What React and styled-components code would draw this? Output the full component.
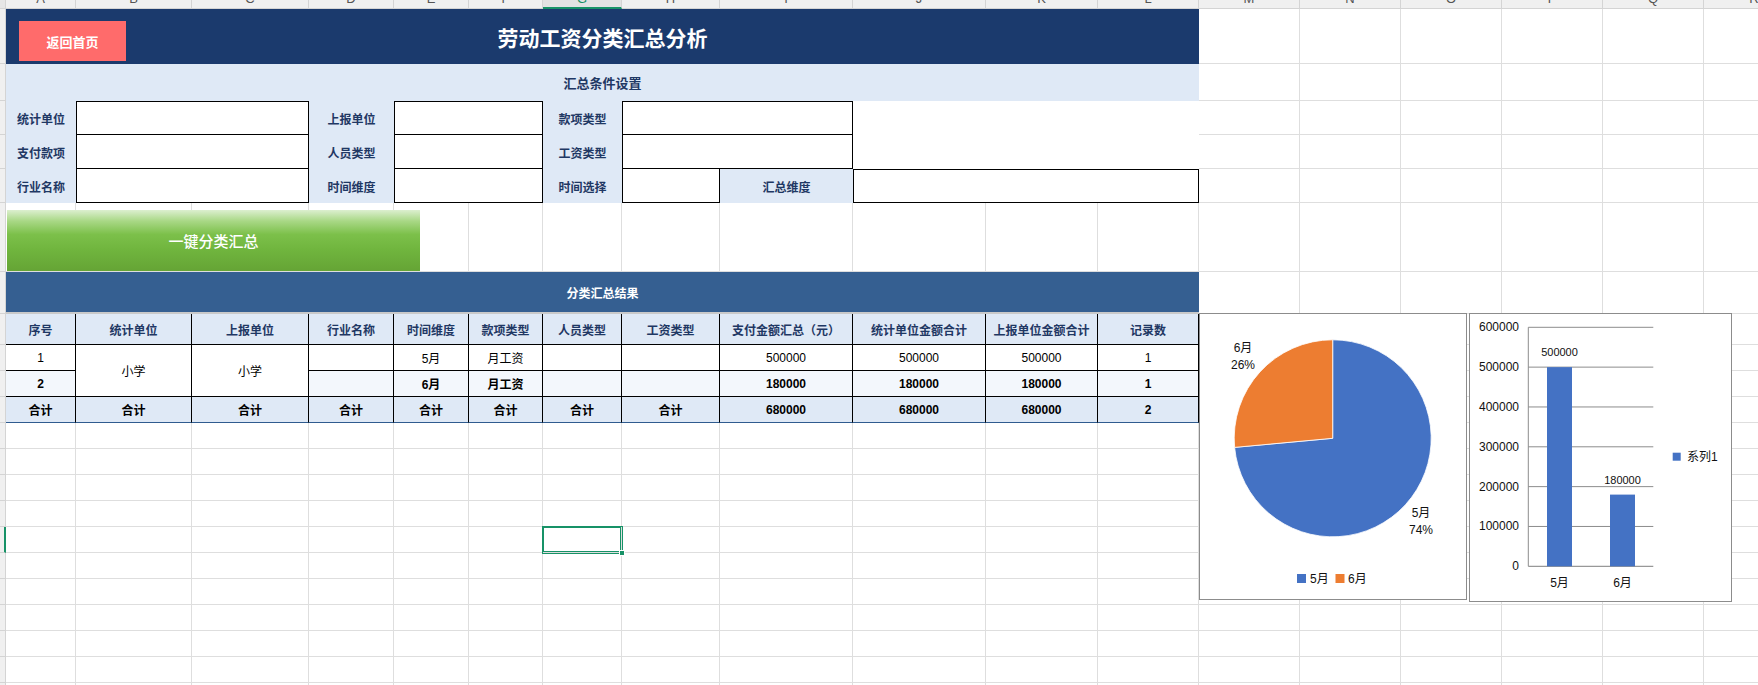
import React from "react";
import styled, { createGlobalStyle, css } from "styled-components";

const NAVY = "#1b3a6d";
const BAND = "#355f91";
const PALE = "#dfe9f6";
const STRIPE = "#f3f7fc";
const INK = "#1f3864";
const GRID = "#dedede";
const GREEN = "#179267";
const FONT = `"Liberation Sans", "Noto Sans CJK SC", sans-serif`;

// sheet geometry, columns A..R and rows from the title row down
const COL_WIDTHS = [70, 116, 117, 85, 75, 74, 79, 98, 133, 133, 112, 101, 101, 101, 101, 101, 101, 101];
const ROW_HEIGHTS = [55, 37, 34, 34, 34, 69, 42, 31, 26, 26, 26, 26, 26, 26, 26, 26, 26, 26, 26, 26, 26, 26];
const LETTERS = "ABCDEFGHIJKLMNOPQR".split("");
const SEL_COL = 6;
const SEL_ROW = 15;

const GlobalStyle = createGlobalStyle`
  html, body {
    margin: 0;
    padding: 0;
    background: #fff;
    overflow: hidden;
  }
  body {
    font-family: ${FONT};
  }
`;

const place = css`
  grid-column: ${(p) => p.$c + 2} / span ${(p) => p.$cs || 1};
  grid-row: ${(p) => p.$r + 2} / span ${(p) => p.$rs || 1};
`;

const Workbook = styled.div`
  width: 1758px;
  height: 685px;
  overflow: hidden;
  background: #fff;
  font-family: ${FONT};
`;

const Sheet = styled.div`
  display: grid;
  grid-template-columns: 6px ${COL_WIDTHS.map((w) => `${w}px`).join(" ")};
  grid-template-rows: 9px ${ROW_HEIGHTS.map((h) => `${h}px`).join(" ")};
`;

const Corner = styled.div`
  grid-column: 1;
  grid-row: 1;
  background: #e6e6e6;
  border-right: 1px solid #d4d4d4;
  border-bottom: 1px solid #d4d4d4;
  box-sizing: border-box;
`;

const ColHead = styled.div`
  grid-row: 1;
  grid-column: ${(p) => p.$c + 2};
  display: flex;
  align-items: flex-end;
  justify-content: center;
  overflow: hidden;
  box-sizing: border-box;
  background: ${(p) => (p.$active ? "#e2e2e2" : "#f0f0f0")};
  border-right: 1px solid #d4d4d4;
  border-bottom: ${(p) => (p.$active ? `2px solid ${GREEN}` : "1px solid #d4d4d4")};
  color: ${(p) => (p.$active ? GREEN : "#555")};
  font-size: 13px;

  span {
    line-height: 13px;
    margin-bottom: ${(p) => (p.$active ? 2 : 3)}px;
  }
`;

const RowHead = styled.div`
  grid-column: 1;
  grid-row: ${(p) => p.$r + 2};
  box-sizing: border-box;
  background: #f0f0f0;
  border-right: ${(p) => (p.$active ? `2px solid ${GREEN}` : "1px solid #d4d4d4")};
  border-bottom: 1px solid #d4d4d4;
`;

const GridCell = styled.div`
  ${place};
  box-sizing: border-box;
  background: #fff;
  border-right: 1px solid ${GRID};
  border-bottom: 1px solid ${GRID};

  ${(p) =>
    p.$selected &&
    css`
      position: relative;
      z-index: 3;
      box-shadow: 0 0 0 1px ${GREEN}, inset 0 0 0 1px ${GREEN};

      &::after {
        content: "";
        position: absolute;
        right: -4px;
        bottom: -4px;
        width: 4px;
        height: 4px;
        background: ${GREEN};
        border: 1px solid #fff;
      }
    `}
`;

const TitleBar = styled.div`
  ${place};
  display: grid;
  grid-template-columns: 1fr auto 1fr;
  align-items: center;
  background: ${NAVY};
`;

const BackButton = styled.button`
  justify-self: start;
  align-self: start;
  margin: 12px 0 0 13px;
  width: 107px;
  height: 40px;
  padding: 0;
  border: none;
  background: #ff6b6b;
  color: #fff;
  font-family: ${FONT};
  font-size: 13px;
  font-weight: 700;
`;

const Title = styled.h1`
  margin: 0;
  color: #fff;
  font-size: 21px;
  font-weight: 700;
`;

const SectionBar = styled.div`
  ${place};
  display: flex;
  align-items: center;
  justify-content: center;
  box-sizing: border-box;
  background: ${(p) => (p.$dark ? BAND : PALE)};
  color: ${(p) => (p.$dark ? "#fff" : INK)};
  font-size: ${(p) => (p.$dark ? 12 : 13)}px;
  font-weight: 700;
  ${(p) => p.$dark && css`border-bottom: 2px solid #c9c9c9;`}
`;

const FieldLabel = styled.div`
  ${place};
  display: flex;
  align-items: center;
  justify-content: center;
  background: ${PALE};
  color: ${INK};
  font-size: 12px;
  font-weight: 700;
`;

const FieldInput = styled.div`
  ${place};
  box-sizing: border-box;
  background: #fff;
  border: 1px solid #000;
  ${(p) => !p.$top && css`border-top: none;`}
`;

const BlankPanel = styled.div`
  ${place};
  background: #fff;
`;

const RunButton = styled.button`
  ${place};
  justify-self: start;
  align-self: start;
  position: relative;
  z-index: 1;
  margin: 7px 0 0 1px;
  width: 413px;
  height: 61px;
  padding: 0;
  border: none;
  background: linear-gradient(180deg, #dcefcf 0%, #a9d886 18%, #7cc04a 40%, #70b53e 65%, #65a435 100%);
  color: #fff;
  font-family: ${FONT};
  font-size: 15px;
  font-weight: 500;
`;

const TH = styled.div`
  ${place};
  display: flex;
  align-items: center;
  justify-content: center;
  box-sizing: border-box;
  background: ${PALE};
  border-right: 1px solid #000;
  border-bottom: 1px solid #000;
  color: ${INK};
  font-size: 12px;
  font-weight: 700;
  white-space: nowrap;
`;

const SHADES = { plain: "#fff", stripe: STRIPE, total: PALE };

const TD = styled.div`
  ${place};
  display: flex;
  align-items: center;
  justify-content: center;
  box-sizing: border-box;
  background: ${(p) => SHADES[p.$shade || "plain"]};
  border-right: 1px solid #000;
  border-bottom: 1px solid ${(p) => (p.$shade === "total" ? "#2f5b8f" : "#000")};
  color: #000;
  font-size: 12px;
  font-weight: ${(p) => (p.$bold ? 700 : 400)};
`;

const ChartFrame = styled.div`
  ${place};
  justify-self: start;
  align-self: start;
  position: relative;
  z-index: 2;
  margin: -1px 0 0 ${(p) => p.$dx || 0}px;
  width: ${(p) => p.$w}px;
  height: ${(p) => p.$h}px;
  box-sizing: border-box;
  border: 1px solid #8c8c8c;
  background: #fff;
`;

const ChartSvg = styled.svg`
  display: block;
  width: 100%;
  height: 100%;
  font-family: ${FONT};
`;

const Label = styled.text`
  font-size: ${(p) => p.$size || 12}px;
  fill: #111;
  text-anchor: ${(p) => p.$anchor || "middle"};
  dominant-baseline: central;
`;

function PieChart() {
  const cx = 132.7;
  const cy = 124.3;
  const r = 98.5;
  const share = 500000 / 680000;
  const ang = share * Math.PI * 2;
  const ex = cx + r * Math.sin(ang);
  const ey = cy - r * Math.cos(ang);
  const may = `M${cx} ${cy} L${cx} ${cy - r} A${r} ${r} 0 1 1 ${ex} ${ey} Z`;
  const june = `M${cx} ${cy} L${ex} ${ey} A${r} ${r} 0 0 1 ${cx} ${cy - r} Z`;

  return (
    <ChartSvg viewBox="0 0 266 285">
      <path d={may} fill="#4472c4" stroke="#fff" strokeWidth="0.8" />
      <path d={june} fill="#ed7d31" stroke="#fff" strokeWidth="0.8" />
      <Label x="43" y="34">6月</Label>
      <Label x="43" y="51">26%</Label>
      <Label x="221" y="199">5月</Label>
      <Label x="221" y="216">74%</Label>
      <rect x="97" y="260" width="9" height="9" fill="#4472c4" />
      <Label x="110" y="264.5" $anchor="start">5月</Label>
      <rect x="135.5" y="260" width="9" height="9" fill="#ed7d31" />
      <Label x="148" y="264.5" $anchor="start">6月</Label>
    </ChartSvg>
  );
}

function BarChart() {
  const x0 = 58.3;
  const x1 = 183.3;
  const top = 13.3;
  const base = 252.3;
  const step = (base - top) / 6;
  const ticks = [0, 1, 2, 3, 4, 5, 6];
  const bars = [
    { label: "5月", value: 500000, x: 77 },
    { label: "6月", value: 180000, x: 140 },
  ];

  return (
    <ChartSvg viewBox="0 0 261 287">
      {ticks.map((t) => {
        const y = base - t * step;
        return (
          <g key={t}>
            <line x1={x0} x2={x1} y1={y} y2={y} stroke={t === 0 ? "#7f7f7f" : "#8c8c8c"} strokeWidth="1" />
            <Label x="49" y={y} $anchor="end">{t * 100000}</Label>
          </g>
        );
      })}
      <line x1={x0} x2={x0} y1={top} y2={base} stroke="#8c8c8c" strokeWidth="1" />
      {bars.map((b) => {
        const h = (b.value / 100000) * step;
        return (
          <g key={b.label}>
            <rect x={b.x} y={base - h} width="25" height={h} fill="#4472c4" />
            <Label x={b.x + 12.5} y={base - h - 15} $size={11}>{b.value}</Label>
            <Label x={b.x + 12.5} y="269">{b.label}</Label>
          </g>
        );
      })}
      <rect x="202.7" y="138.7" width="8" height="8" fill="#4472c4" />
      <Label x="217" y="142.7" $anchor="start">系列1</Label>
    </ChartSvg>
  );
}

const FORM_ROWS = [
  ["统计单位", "上报单位", "款项类型"],
  ["支付款项", "人员类型", "工资类型"],
  ["行业名称", "时间维度", "时间选择"],
];

const HEAD = [
  "序号", "统计单位", "上报单位", "行业名称", "时间维度", "款项类型",
  "人员类型", "工资类型", "支付金额汇总（元）", "统计单位金额合计", "上报单位金额合计", "记录数",
];

const ROWS = [
  { shade: "plain", bold: false, cells: ["1", null, null, "", "5月", "月工资", "", "", "500000", "500000", "500000", "1"] },
  { shade: "stripe", bold: true, cells: ["2", null, null, "", "6月", "月工资", "", "", "180000", "180000", "180000", "1"] },
  { shade: "total", bold: true, cells: ["合计", "合计", "合计", "合计", "合计", "合计", "合计", "合计", "680000", "680000", "680000", "2"] },
];

function buildSheet() {
  const covered = new Set();
  const els = [];
  const cell = (Comp, c, r, cs, rs, children, extra = {}) => {
    for (let i = c; i < c + cs; i++) {
      for (let j = r; j < r + rs; j++) covered.add(`${i}:${j}`);
    }
    els.push(
      <Comp key={`${c}:${r}`} $c={c} $r={r} $cs={cs} $rs={rs} {...extra}>
        {children}
      </Comp>
    );
  };

  cell(TitleBar, 0, 0, 12, 1, [
    <BackButton key="back">返回首页</BackButton>,
    <Title key="title">劳动工资分类汇总分析</Title>,
    <span key="pad" />,
  ]);
  cell(SectionBar, 0, 1, 12, 1, "汇总条件设置");

  FORM_ROWS.forEach((labels, i) => {
    const r = 2 + i;
    const first = i === 0;
    cell(FieldLabel, 0, r, 1, 1, labels[0]);
    cell(FieldInput, 1, r, 2, 1, null, { $top: first });
    cell(FieldLabel, 3, r, 1, 1, labels[1]);
    cell(FieldInput, 4, r, 2, 1, null, { $top: first });
    cell(FieldLabel, 6, r, 1, 1, labels[2]);
    if (i < 2) {
      cell(FieldInput, 7, r, 2, 1, null, { $top: first });
    } else {
      cell(FieldInput, 7, r, 1, 1, null);
      cell(FieldLabel, 8, r, 1, 1, "汇总维度");
      cell(FieldInput, 9, r, 3, 1, null, { $top: true });
    }
  });
  cell(BlankPanel, 9, 2, 3, 2, null);

  cell(SectionBar, 0, 6, 12, 1, "分类汇总结果", { $dark: true });
  HEAD.forEach((h, c) => cell(TH, c, 7, 1, 1, h));

  ROWS.forEach((row, i) => {
    const r = 8 + i;
    row.cells.forEach((v, c) => {
      if (v === null) {
        if (i === 0) cell(TD, c, r, 1, 2, "小学");
        return;
      }
      cell(TD, c, r, 1, 1, v, { $shade: row.shade, $bold: row.bold });
    });
  });

  const empties = [];
  ROW_HEIGHTS.forEach((_, r) => {
    COL_WIDTHS.forEach((__, c) => {
      if (!covered.has(`${c}:${r}`)) {
        empties.push(
          <GridCell key={`e${c}:${r}`} $c={c} $r={r} $selected={c === SEL_COL && r === SEL_ROW} />
        );
      }
    });
  });

  return [...empties, ...els];
}

export default function App() {
  return (
    <Workbook>
      <GlobalStyle />
      <Sheet>
        <Corner />
        {LETTERS.map((l, c) => (
          <ColHead key={l} $c={c} $active={c === SEL_COL}>
            <span>{l}</span>
          </ColHead>
        ))}
        {ROW_HEIGHTS.map((_, r) => (
          <RowHead key={r} $r={r} $active={r === SEL_ROW} />
        ))}
        {buildSheet()}
        <RunButton $c={0} $r={5} $cs={5}>一键分类汇总</RunButton>
        <ChartFrame $c={12} $r={7} $cs={3} $rs={11} $w={268} $h={287}>
          <PieChart />
        </ChartFrame>
        <ChartFrame $c={12} $r={7} $cs={6} $rs={11} $dx={270} $w={263} $h={289}>
          <BarChart />
        </ChartFrame>
      </Sheet>
    </Workbook>
  );
}
